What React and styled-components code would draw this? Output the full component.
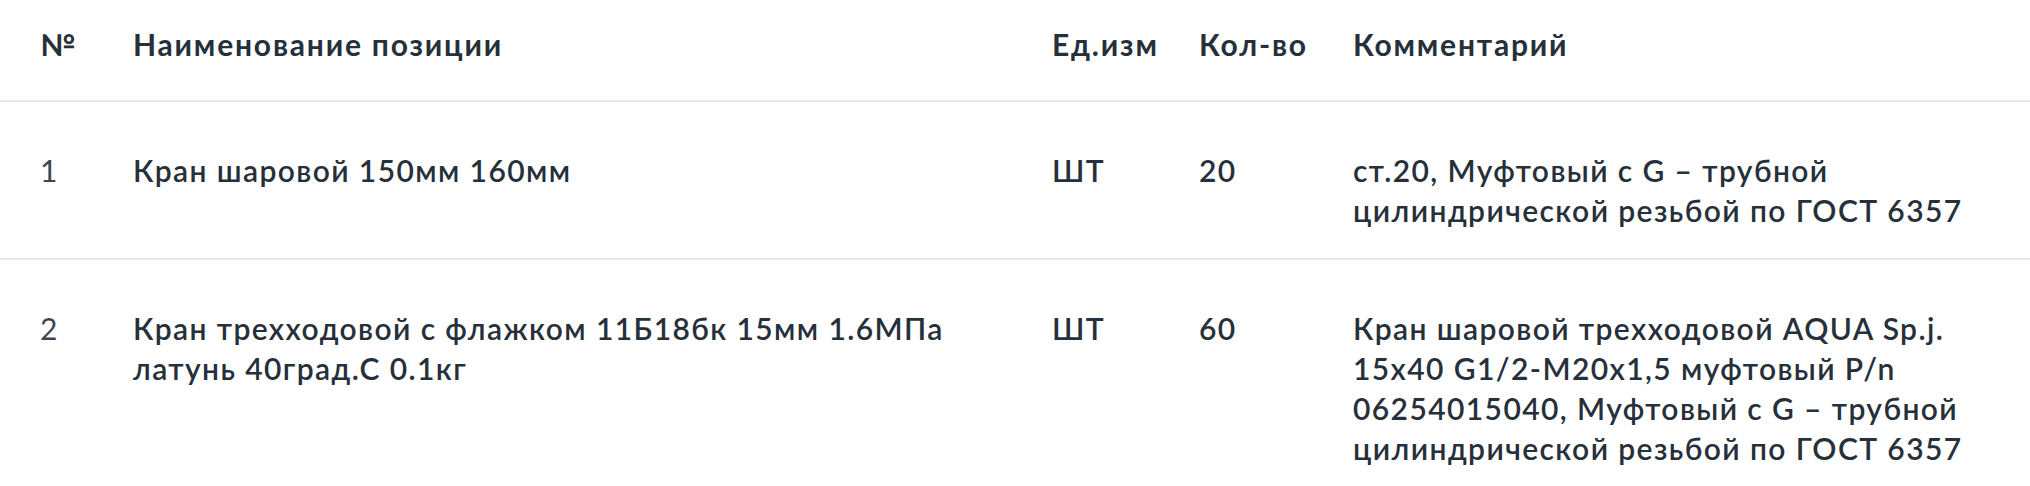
import React from "react";
import styled, { createGlobalStyle } from "styled-components";

const GlobalStyle = createGlobalStyle`
  html, body {
    margin: 0;
    padding: 0;
    background: #ffffff;
  }
  body {
    font-family: "Lato", "Noto Sans", sans-serif;
    color: #26303b;
    -webkit-font-smoothing: antialiased;
  }
`;

const Table = styled.div`
  width: 2030px;
  display: grid;
  grid-template-columns: 93px 919px 147px 154px 637px;
  padding: 0 40px;
  box-sizing: border-box;
`;

const Row = styled.div`
  display: contents;
`;

const Cell = styled.div`
  font-size: 30px;
  line-height: 40px;
  font-weight: ${(p) => (p.$head ? 700 : p.$index ? 400 : 600)};
  letter-spacing: ${(p) => (p.$head ? "1.8px" : "1.4px")};
  color: ${(p) => (p.$index ? "#3b4652" : "#26303b")};
  padding: ${(p) => (p.$head ? "24px 0 36px" : "48px 0 28px")};
  border-bottom: 2px solid #e3e8ee;
  margin: 0 -40px;
  padding-left: 40px;
  padding-right: 40px;
  min-width: 0;
  &:not(:first-child) {
    margin-left: 0;
    padding-left: 0;
  }
  &:not(:last-child) {
    margin-right: 0;
    padding-right: 0;
  }
`;

const items = [
  {
    n: "1",
    name: "Кран шаровой 150мм 160мм",
    unit: "ШТ",
    qty: "20",
    comment: "ст.20, Муфтовый с G – трубной цилиндрической резьбой по ГОСТ 6357",
  },
  {
    n: "2",
    name: "Кран трехходовой с флажком 11Б18бк 15мм 1.6МПа латунь 40град.С 0.1кг",
    unit: "ШТ",
    qty: "60",
    comment:
      "Кран шаровой трехходовой AQUA Sp.j. 15x40 G1/2-M20x1,5 муфтовый P/n 06254015040, Муфтовый с G – трубной цилиндрической резьбой по ГОСТ 6357",
  },
];

export default function App() {
  return (
    <>
      <GlobalStyle />
      <Table>
        <Row>
          <Cell $head>№</Cell>
          <Cell $head>Наименование позиции</Cell>
          <Cell $head>Ед.изм</Cell>
          <Cell $head>Кол-во</Cell>
          <Cell $head>Комментарий</Cell>
        </Row>
        {items.map((it) => (
          <Row key={it.n}>
            <Cell $index>{it.n}</Cell>
            <Cell>{it.name}</Cell>
            <Cell>{it.unit}</Cell>
            <Cell>{it.qty}</Cell>
            <Cell>{it.comment}</Cell>
          </Row>
        ))}
      </Table>
    </>
  );
}
